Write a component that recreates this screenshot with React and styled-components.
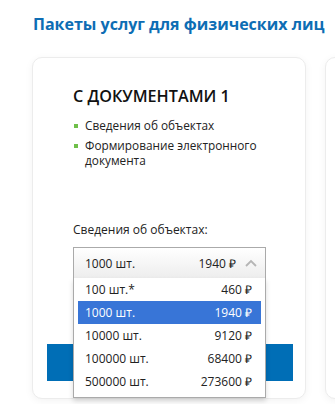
import React, { useState } from 'react';
import styled, { createGlobalStyle } from 'styled-components';

const GlobalStyle = createGlobalStyle`
    html, body {
        margin: 0;
        padding: 0;
        background: #fff;
        font-family: "Open Sans", "Liberation Sans", sans-serif;
        overflow: hidden;
    }
`;

const Page = styled.div`
    width: 335px;
    height: 404px;
    padding: 14px 0 0 33px;
    box-sizing: border-box;
    overflow: hidden;
`;

const Heading = styled.h2`
    margin: 0;
    font-size: 16px;
    line-height: 20px;
    font-weight: 700;
    color: #0d6db4;
    white-space: nowrap;
`;

const Cards = styled.div`
    display: flex;
    gap: 19px;
    margin-top: 23px;
    margin-left: -1px;
`;

const Card = styled.div`
    flex: 0 0 auto;
    width: 274px;
    height: 342px;
    box-sizing: border-box;
    border: 1px solid #ececec;
    border-radius: 10px;
    background: #fff;
    box-shadow: 0 2px 8px rgba(0, 0, 0, 0.05);
    padding: 25px 14px 0 40px;
`;

const CardTitle = styled.h3`
    margin: 0;
    font-size: 16.2px;
    line-height: 26px;
    font-weight: 600;
    color: #111;
`;

const Features = styled.ul`
    list-style: none;
    margin: 9px 0 0;
    padding: 0;
    display: flex;
    flex-direction: column;
    gap: 5px;
`;

const Feature = styled.li`
    position: relative;
    padding-left: 12px;
    width: 180px;
    font-size: 11.8px;
    line-height: 15px;
    color: #222;

    &::before {
        content: '';
        position: absolute;
        left: 1px;
        top: 6px;
        width: 4px;
        height: 4px;
        background: #6fbf4a;
    }
`;

const Label = styled.div`
    margin-top: 54px;
    font-size: 12px;
    line-height: 16px;
    color: #222;
`;

const SelectWrap = styled.div`
    position: relative;
    margin-top: 9px;
    width: 193px;
`;

const SelectBox = styled.div`
    display: flex;
    align-items: center;
    height: 31px;
    box-sizing: border-box;
    border: 1px solid #aaa;
    border-bottom: none;
    background: linear-gradient(#ffffff 0%, #ededed 100%);
    padding: 0 8px 0 11px;
    font-size: 12px;
    color: #222;
`;

const Name = styled.span`
    flex: 1;
`;

const Price = styled.span`
    text-align: right;
`;

const Chevron = styled.svg`
    margin-left: 9px;
    flex: 0 0 auto;
`;

const Options = styled.ul`
    position: absolute;
    top: 31px;
    left: 0;
    right: 0;
    margin: 0;
    padding: 0 4px 4px;
    list-style: none;
    background: #fff;
    border: 1px solid #aaa;
    border-top: none;
    box-shadow: 0 3px 5px rgba(0, 0, 0, 0.15);
    z-index: 2;
`;

const Option = styled.li`
    display: flex;
    align-items: center;
    height: 23px;
    padding: 0 9px 0 7px;
    font-size: 12px;
    color: ${(p) => (p.$active ? '#fff' : '#222')};
    background: ${(p) => (p.$active ? '#3875d7' : 'transparent')};
`;

const BuyButton = styled.button`
    display: block;
    margin: 66px 0 0 -26px;
    width: 246px;
    height: 37px;
    border: none;
    background: #006eb6;
`;

const options = [
    { name: '100 шт.*', price: '460 ₽' },
    { name: '1000 шт.', price: '1940 ₽' },
    { name: '10000 шт.', price: '9120 ₽' },
    { name: '100000 шт.', price: '68400 ₽' },
    { name: '500000 шт.', price: '273600 ₽' },
];

export default function App() {
    const [selected, setSelected] = useState(1);

    return (
        <>
            <GlobalStyle />
            <Page>
                <Heading>Пакеты услуг для физических лиц</Heading>
                <Cards>
                    <Card>
                        <CardTitle>С ДОКУМЕНТАМИ 1</CardTitle>
                        <Features>
                            <Feature>Сведения об объектах</Feature>
                            <Feature>Формирование электронного документа</Feature>
                        </Features>
                        <Label>Сведения об объектах:</Label>
                        <SelectWrap>
                            <SelectBox>
                                <Name>{options[selected].name}</Name>
                                <Price>{options[selected].price}</Price>
                                <Chevron width="12" height="8" viewBox="0 0 12 8">
                                    <path d="M1 7 L6 2 L11 7" fill="none" stroke="#b5b5b5" strokeWidth="1.8" />
                                </Chevron>
                            </SelectBox>
                            <Options>
                                {options.map((o, i) => (
                                    <Option key={o.name} $active={i === selected} onClick={() => setSelected(i)}>
                                        <Name>{o.name}</Name>
                                        <Price>{o.price}</Price>
                                    </Option>
                                ))}
                            </Options>
                        </SelectWrap>
                        <BuyButton />
                    </Card>
                    <Card />
                </Cards>
            </Page>
        </>
    );
}
